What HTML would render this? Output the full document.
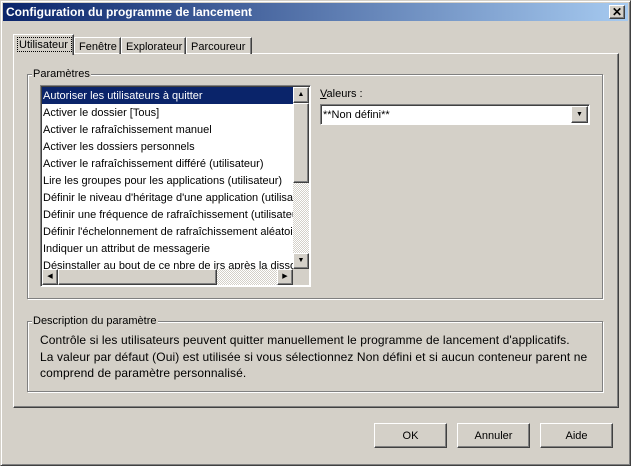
<!DOCTYPE html>
<html><head><meta charset="utf-8"><style>
*{margin:0;padding:0;box-sizing:border-box}
body{width:631px;height:466px;background:#d4d0c8;font-family:"Liberation Sans",sans-serif;font-size:11px;color:#000;position:relative;overflow:hidden}
.a{position:absolute}
.raised{border-top:1px solid #fff;border-left:1px solid #fff;border-right:1px solid #404040;border-bottom:1px solid #404040;box-shadow:inset -1px -1px 0 #808080}
.btn{background:#d4d0c8;text-align:center;line-height:25px}
.grp{border:1px solid #808080;box-shadow:1px 1px 0 #fff, inset 1px 1px 0 #fff}
.legend{background:#d4d0c8;padding:0 1px}
.item{position:absolute;left:0;height:17px;line-height:19px;padding-left:1px;white-space:nowrap;width:252px;overflow:hidden}
.dither{background-image:repeating-conic-gradient(#d4d0c8 0 25%,#fff 0 50%);background-size:2px 2px}
</style></head><body>
<div class="a" style="left:0;top:0;width:631px;height:466px;border-top:1px solid #d4d0c8;border-left:1px solid #d4d0c8;border-right:1px solid #404040;border-bottom:1px solid #404040;box-shadow:inset 1px 1px 0 #fff,inset -1px -1px 0 #808080"></div>
<div class="a" style="left:3px;top:3px;width:625px;height:18px;background:linear-gradient(90deg,#0a246a,#a6caf0);color:#fff;font-weight:bold;font-size:12px;line-height:18px;padding-left:3px">Configuration du programme de lancement</div>
<div class="a raised btn" style="left:609px;top:5px;width:16px;height:14px;line-height:12px;font-size:12px;font-weight:bold">✕</div>

<div class="a raised" style="left:13px;top:53px;width:606px;height:355px"></div>
<div class="a" style="left:74px;top:37px;width:47px;height:17px;border-top:1px solid #fff;border-left:1px solid #fff;border-right:1px solid #404040;box-shadow:inset -1px 0 0 #808080;padding:3px 0 0 4px">Fenêtre</div>
<div class="a" style="left:121px;top:37px;width:65px;height:17px;border-top:1px solid #fff;border-left:1px solid #fff;border-right:1px solid #404040;box-shadow:inset -1px 0 0 #808080;padding:3px 0 0 4px">Explorateur</div>
<div class="a" style="left:186px;top:37px;width:66px;height:17px;border-top:1px solid #fff;border-left:1px solid #fff;border-right:1px solid #404040;box-shadow:inset -1px 0 0 #808080;padding:3px 0 0 4px">Parcoureur</div>
<div class="a" style="left:13px;top:34px;width:61px;height:21px;background:#d4d0c8;border-top:1px solid #fff;border-left:1px solid #fff;border-right:1px solid #404040;box-shadow:inset -1px 0 0 #808080"></div>
<div class="a" style="left:17px;top:37px;width:55px;height:15px;border:1px dotted #000;padding:0 0 0 1px;line-height:14px">Utilisateur</div>

<div class="a grp" style="left:27px;top:74px;width:576px;height:225px"></div>
<div class="a legend" style="left:32px;top:68px">Paramètres</div>

<div class="a" style="left:40px;top:85px;width:271px;height:202px;background:#fff;border-top:1px solid #808080;border-left:1px solid #808080;border-right:1px solid #fff;border-bottom:1px solid #fff;box-shadow:inset 1px 1px 0 #404040"></div>
<div class="a" style="left:42px;top:87px;width:252px;height:182px;overflow:hidden">
<div class="item" style="top:0;background:#0a246a;color:#fff">Autoriser les utilisateurs à quitter</div>
<div class="item" style="top:17px">Activer le dossier [Tous]</div>
<div class="item" style="top:34px">Activer le rafraîchissement manuel</div>
<div class="item" style="top:51px">Activer les dossiers personnels</div>
<div class="item" style="top:68px">Activer le rafraîchissement différé (utilisateur)</div>
<div class="item" style="top:85px">Lire les groupes pour les applications (utilisateur)</div>
<div class="item" style="top:102px">Définir le niveau d'héritage d'une application (utilisateur)</div>
<div class="item" style="top:119px">Définir une fréquence de rafraîchissement (utilisateur)</div>
<div class="item" style="top:136px">Définir l'échelonnement de rafraîchissement aléatoire</div>
<div class="item" style="top:153px">Indiquer un attribut de messagerie</div>
<div class="item" style="top:170px">Désinstaller au bout de ce nbre de jrs après la dissociation</div>
</div>
<div class="a dither" style="left:293px;top:87px;width:16px;height:182px"></div>
<div class="a raised btn" style="left:293px;top:87px;width:16px;height:16px;font-size:7px;line-height:13px">▲</div>
<div class="a raised" style="left:293px;top:103px;width:16px;height:80px;background:#d4d0c8"></div>
<div class="a raised btn" style="left:293px;top:253px;width:16px;height:16px;font-size:7px;line-height:14px">▼</div>
<div class="a dither" style="left:42px;top:269px;width:251px;height:16px"></div>
<div class="a raised btn" style="left:42px;top:269px;width:16px;height:16px;font-size:7px;line-height:14px">◀</div>
<div class="a raised" style="left:58px;top:269px;width:159px;height:16px;background:#d4d0c8"></div>
<div class="a raised btn" style="left:277px;top:269px;width:16px;height:16px;font-size:7px;line-height:14px">▶</div>
<div class="a" style="left:293px;top:269px;width:16px;height:16px;background:#d4d0c8"></div>

<div class="a" style="left:320px;top:88px"><u>V</u>aleurs :</div>
<div class="a" style="left:320px;top:104px;width:270px;height:21px;background:#fff;border-top:1px solid #808080;border-left:1px solid #808080;border-right:1px solid #fff;border-bottom:1px solid #fff;box-shadow:inset 1px 1px 0 #404040;padding:4px 0 0 2px">**Non défini**</div>
<div class="a raised btn" style="left:571px;top:106px;width:17px;height:17px;font-size:7px;line-height:15px">▼</div>

<div class="a grp" style="left:27px;top:321px;width:576px;height:71px"></div>
<div class="a legend" style="left:32px;top:315px">Description du paramètre</div>
<div class="a" style="left:40px;top:332px;font-size:12px;line-height:16.5px;letter-spacing:0.1px;white-space:nowrap">Contrôle si les utilisateurs peuvent quitter manuellement le programme de lancement d'applicatifs.<br>La valeur par défaut (Oui) est utilisée si vous sélectionnez Non défini et si aucun conteneur parent ne<br>comprend de paramètre personnalisé.</div>

<div class="a raised btn" style="left:374px;top:423px;width:73px;height:25px">OK</div>
<div class="a raised btn" style="left:457px;top:423px;width:73px;height:25px">Annuler</div>
<div class="a raised btn" style="left:540px;top:423px;width:73px;height:25px">Aide</div>
</body></html>
